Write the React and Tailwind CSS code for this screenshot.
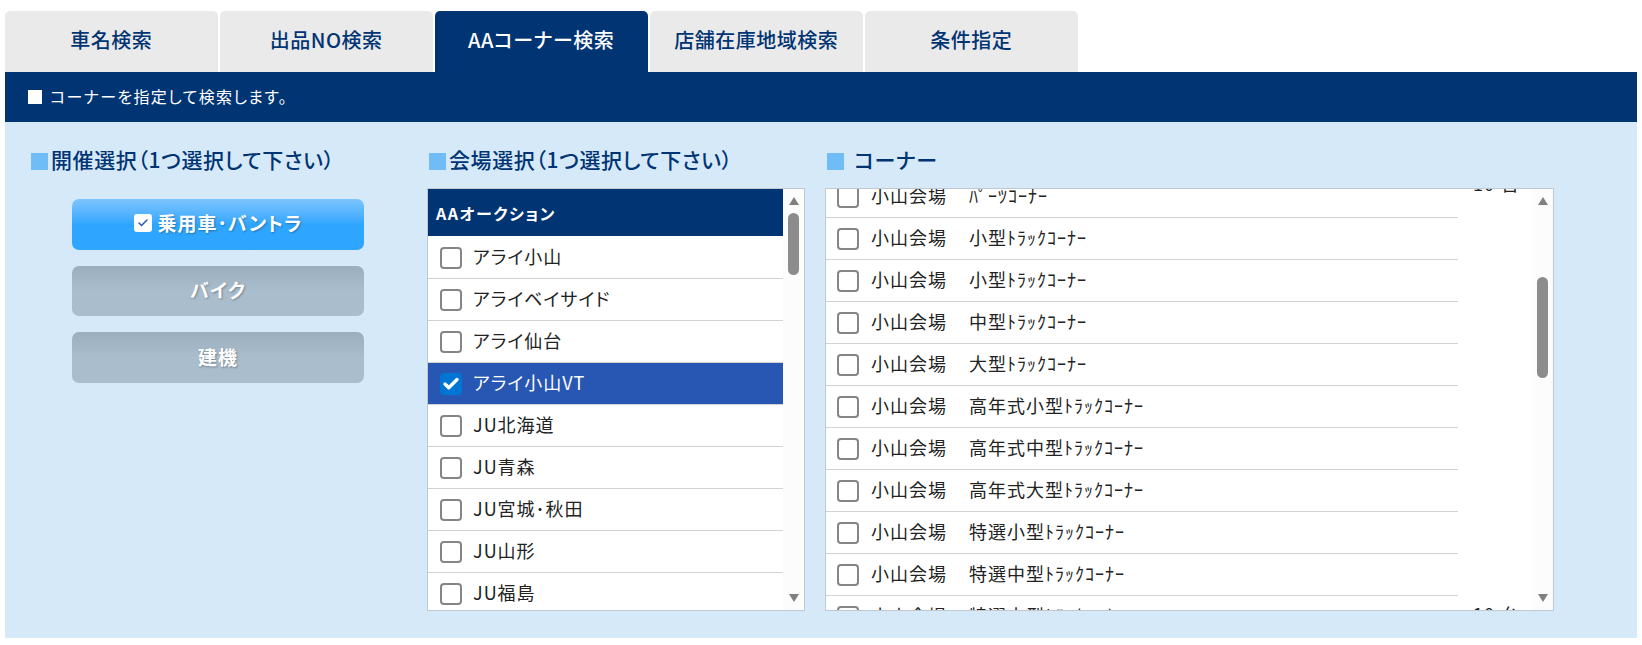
import { Check } from 'lucide-react'

const tabs = ['車名検索', '出品NO検索', 'AAコーナー検索', '店舗在庫地域検索', '条件指定']

const venues = ['アライ小山', 'アライベイサイド', 'アライ仙台', 'アライ小山VT', 'JU北海道', 'JU青森', 'JU宮城･秋田', 'JU山形', 'JU福島']

const corners = [
  { name: 'ﾊﾟｰﾂｺｰﾅｰ', up: true },
  { name: '小型ﾄﾗｯｸｺｰﾅｰ' },
  { name: '小型ﾄﾗｯｸｺｰﾅｰ' },
  { name: '中型ﾄﾗｯｸｺｰﾅｰ' },
  { name: '大型ﾄﾗｯｸｺｰﾅｰ' },
  { name: '高年式小型ﾄﾗｯｸｺｰﾅｰ' },
  { name: '高年式中型ﾄﾗｯｸｺｰﾅｰ' },
  { name: '高年式大型ﾄﾗｯｸｺｰﾅｰ' },
  { name: '特選小型ﾄﾗｯｸｺｰﾅｰ' },
  { name: '特選中型ﾄﾗｯｸｺｰﾅｰ' },
  { name: '特選大型ﾄﾗｯｸｺｰﾅｰ', count: true },
]

function Heading({ children }) {
  return (
    <h2 className="flex items-center h-[20px] pl-[2px] text-[21px] tracking-[0.6px] font-medium text-[#003473] whitespace-nowrap">
      <span className="w-[17px] h-[17px] bg-[#6fbcf7] shrink-0 mr-[3px]" />
      <span className="pb-[2px]">{children}</span>
    </h2>
  )
}

function CheckBox({ checked }) {
  return checked ? (
    <span className="w-[22px] h-[22px] rounded-[4px] bg-[#0075d5] flex items-center justify-center shrink-0">
      <Check size={18} strokeWidth={4.5} className="text-white" />
    </span>
  ) : (
    <span className="w-[22px] h-[22px] rounded-[4px] border-2 border-[#858585] bg-white shrink-0" />
  )
}

function Scrollbar({ thumbTop, thumbHeight }) {
  return (
    <div className="w-[21px] shrink-0 bg-[#fcfcfc] flex flex-col items-center">
      <svg width="10" height="8" viewBox="0 0 10 8" className="mt-[8px] shrink-0">
        <path d="M5 0L10 8H0Z" fill="#808080" />
      </svg>
      <div className={`w-[11px] rounded-full bg-[#8c8c8c] shrink-0 ${thumbTop} ${thumbHeight}`} />
      <svg width="10" height="8" viewBox="0 0 10 8" className="mt-auto mb-[8px] shrink-0">
        <path d="M5 8L10 0H0Z" fill="#808080" />
      </svg>
    </div>
  )
}

function VenueRow({ name, selected }) {
  return (
    <div className={`flex items-center h-[42px] pl-[12px] border-b border-[#d2d2d2] ${selected ? 'bg-[#2757b3] text-white' : 'text-[#222]'}`}>
      <CheckBox checked={selected} />
      <span className="ml-[11px] pb-[3px] text-[18px] tracking-[1px] whitespace-nowrap">{name}</span>
    </div>
  )
}

function CornerRow({ item }) {
  return (
    <div className="flex h-[42px] shrink-0 text-[#222]">
      <div className="w-[632px] shrink-0 flex items-center pl-[11px] border-b border-[#d2d2d2]">
        <CheckBox />
        <span className="ml-[12px] pb-[3px] text-[18px] tracking-[1px] whitespace-nowrap">
          小山会場{'　'}<span className="ml-[3px]">{item.name}</span>
        </span>
      </div>
      {(item.count || item.up) && (
        <span className={`ml-[15px] text-[18px] tracking-[1px] leading-[42px] whitespace-nowrap ${item.up ? '-translate-y-[14px]' : '-translate-y-[3px]'}`}>
          10<span className="ml-[6px]">台</span>
        </span>
      )}
    </div>
  )
}

export default function App() {
  return (
    <div
      className="min-h-[645px] bg-white pt-[11px] pb-[7px] px-[5px] [font-feature-settings:'palt']"
      style={{ fontFamily: '"Noto Sans CJK JP", "Noto Sans", sans-serif' }}
    >
      <div className="flex gap-[2.5px] h-[61px]">
        {tabs.map((t, i) => (
          <div
            key={t}
            className={`w-[212.5px] rounded-t-[5px] flex items-center justify-center pb-[3px] text-[20px] tracking-[0.5px] font-medium ${i === 2 ? 'bg-[#003473] text-white' : 'bg-[#eaeaea] text-[#003473]'}`}
          >
            {t}
          </div>
        ))}
      </div>

      <div className="h-[50px] bg-[#003473] flex items-center pl-[23px] text-white text-[16px] tracking-[1.35px]">
        <span className="w-[14px] h-[14px] bg-white mr-[8px]" />
        <span className="pb-[2px]">コーナーを指定して検索します。</span>
      </div>

      <div className="bg-[#d6e9f9] h-[516px] pt-[29px] pl-[24px]">
        <div className="flex gap-[20px]">
          <div className="w-[378px] shrink-0">
            <Heading>開催選択（1つ選択して下さい）</Heading>
            <div className="mt-[28px] ml-[43px] w-[292px] flex flex-col gap-[16px]">
              <button className="h-[51px] rounded-[7px] bg-gradient-to-b from-[#7cc5ff] to-[#2ea6ff] to-50% pb-[3px] text-white text-[19px] tracking-[1px] font-bold flex items-center justify-center [text-shadow:1px_1px_2px_rgba(0,0,0,0.3)]">
                <span className="w-[18px] h-[18px] rounded-[3px] bg-white flex items-center justify-center mr-[6px]">
                  <Check size={12} strokeWidth={3} className="text-[#2757b3]" />
                </span>
                乗用車･バントラ
              </button>
              <button className="h-[50px] rounded-[7px] bg-gradient-to-b from-[#9aaebd] to-[#a9bdcd] to-50% pb-[2px] text-white text-[19px] tracking-[1px] font-bold [text-shadow:1px_1px_2px_rgba(0,0,0,0.3)]">バイク</button>
              <button className="h-[51px] rounded-[7px] bg-gradient-to-b from-[#9aaebd] to-[#a9bdcd] to-50% pb-[1px] text-white text-[19px] tracking-[1px] font-bold [text-shadow:1px_1px_2px_rgba(0,0,0,0.3)]">建機</button>
            </div>
          </div>

          <div className="w-[378px] shrink-0">
            <Heading>会場選択（1つ選択して下さい）</Heading>
            <div className="mt-[17px] h-[423px] flex bg-white border border-[#c0c8d2] overflow-hidden">
              <div className="flex-1 min-w-0">
                <div className="h-[47px] mb-[1px] bg-[#003473] text-white text-[16px] tracking-[1.5px] font-bold flex items-center pl-[8px]">AAオークション</div>
                {venues.map((v, i) => (
                  <VenueRow key={v} name={v} selected={i === 3} />
                ))}
              </div>
              <Scrollbar thumbTop="mt-[8px]" thumbHeight="h-[62px]" />
            </div>
          </div>

          <div className="w-[729px] shrink-0">
            <Heading>
              <span className="ml-[7px]">コーナー</span>
            </Heading>
            <div className="mt-[17px] h-[423px] flex bg-white border border-[#c0c8d2] overflow-hidden">
              <div className="flex-1 min-w-0 flex flex-col -mt-[13px]">
                {corners.map((c, i) => (
                  <CornerRow key={i} item={c} />
                ))}
              </div>
              <Scrollbar thumbTop="mt-[72px]" thumbHeight="h-[101px]" />
            </div>
          </div>
        </div>
      </div>
    </div>
  )
}
